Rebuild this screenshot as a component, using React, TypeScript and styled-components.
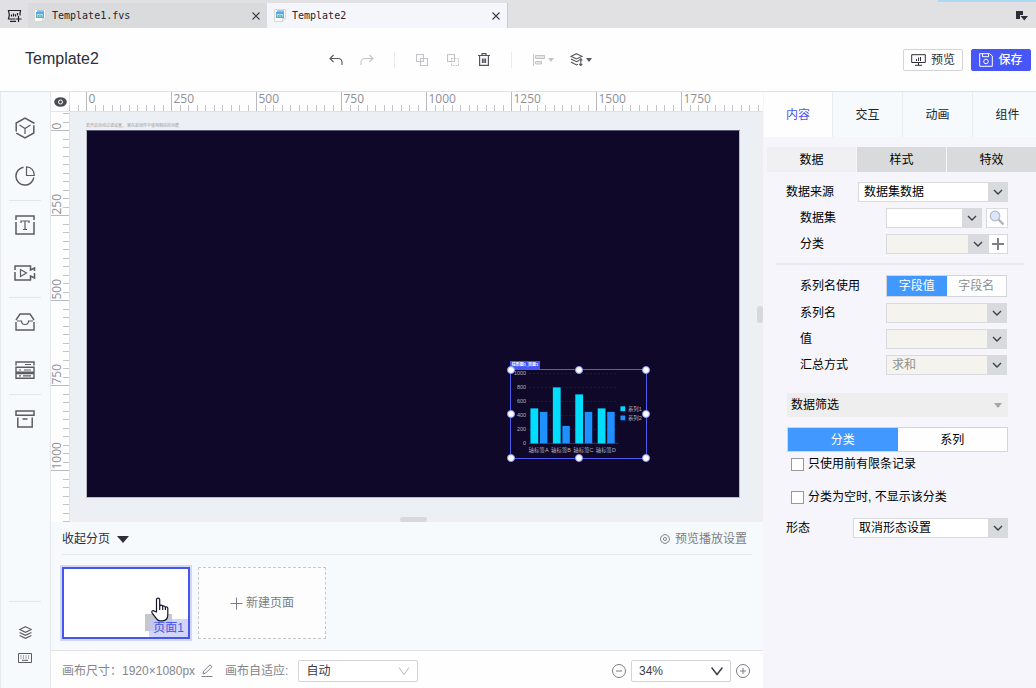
import React from 'react';
import styled, { createGlobalStyle } from 'styled-components';

const GlobalStyle = createGlobalStyle`
  *, *::before, *::after { box-sizing: border-box; }
  body {
    margin: 0;
    background: #f5f5fb;
    color: #1f2029;
    font: 12px/16px "Liberation Sans", "Noto Sans CJK SC", sans-serif;
  }
  button, select, input { font: inherit; color: inherit; margin: 0; }
  button { padding: 0; border: 0; background: none; cursor: pointer; }
  svg { display: block; flex: none; }
`;

const Page = styled.div`
  min-height: 100vh;
  display: flex;
  flex-direction: column;
  overflow: hidden;
`;

/* ---------- file tabs ---------- */

const TabStrip = styled.nav`
  position: relative;
  display: flex;
  height: 28px;
  padding-top: 3px;
  background: #e1e1e3;
`;

const Accent = styled.span`
  position: absolute;
  top: 0;
  right: 0;
  width: 98px;
  height: 2px;
  background: #acd8f6;
`;

const StripButton = styled.button`
  display: grid;
  place-items: center;
  width: 28px;
  height: 25px;
`;

const FileTab = styled.div<{ $active?: boolean }>`
  display: flex;
  align-items: center;
  flex: 0 1 240px;
  padding: 0 7px 0 6px;
  gap: 6px;
  background: ${p => (p.$active ? '#f5f5fc' : '#dadbdd')};
  border-right: 1px solid ${p => (p.$active ? '#c9c9ce' : '#f5f5fc')};
  color: #3b3c45;
`;

const FileName = styled.span`
  flex: 1;
  font: 10px/16px "DejaVu Sans Mono", monospace;
  color: #24242c;
`;

const Spacer = styled.div`
  flex: 1;
`;

/* ---------- header ---------- */

const Header = styled.header`
  display: flex;
  align-items: center;
  height: 64px;
  padding: 0 5px 0 25px;
  background: #fefefe;
  border-bottom: 1px solid #e2e2e4;
`;

const Title = styled.h1`
  width: 295px;
  margin: 0;
  font-size: 16px;
  line-height: 20px;
  font-weight: 400;
  color: #2d2e38;
  padding-bottom: 2px;
`;

const Tools = styled.div`
  display: flex;
  align-items: center;
`;

const Tool = styled.button<{ $wide?: boolean; $dim?: boolean }>`
  display: flex;
  align-items: center;
  justify-content: center;
  gap: 3px;
  width: ${p => (p.$wide ? 38 : 31)}px;
  height: 24px;
  color: ${p => (p.$dim ? '#c3c4c8' : '#55565c')};
`;

const ToolRule = styled.span<{ $after: number }>`
  width: 1px;
  height: 16px;
  margin: 0 ${p => p.$after}px 0 12px;
  background: #ebebed;
`;

const HeaderButton = styled.button<{ $primary?: boolean }>`
  display: flex;
  align-items: center;
  justify-content: center;
  gap: 5px;
  width: 60px;
  height: 22px;
  margin-left: 8px;
  border: 1px solid ${p => (p.$primary ? '#4656f7' : '#d3d4d9')};
  border-radius: 2px;
  background: ${p => (p.$primary ? '#4656f7' : '#fff')};
  color: ${p => (p.$primary ? '#fff' : '#2d2e38')};
  font-weight: ${p => (p.$primary ? 500 : 400)};
`;

/* ---------- body ---------- */

const Body = styled.main`
  flex: 1;
  display: flex;
  min-height: 0;
  border-left: 1px solid #e8e9ee;
`;

const Rail = styled.aside`
  display: flex;
  flex-direction: column;
  flex: none;
  width: 50px;
  padding: 12px 1px 17px 0;
  background: #f6fafd;
  border-right: 1px solid #e4e6ea;
`;

const RailButton = styled.button<{ $small?: boolean }>`
  display: grid;
  place-items: center;
  height: ${p => (p.$small ? 26 : 48)}px;
  color: #5b5c62;
`;

const RailRule = styled.hr<{ $last?: boolean }>`
  width: 32px;
  height: 1px;
  margin: 0 auto ${p => (p.$last ? 17 : 0)}px;
  border: 0;
  background: #e2e5e9;
`;

const Center = styled.section`
  flex: 1;
  min-width: 0;
  display: flex;
  flex-direction: column;
`;

const Stage = styled.div`
  flex: 1;
  display: grid;
  grid-template-columns: 19px minmax(0, 1fr) 7px;
  grid-template-rows: 20px minmax(0, 1fr) 5px;
  background: #efeff3;
`;

const Corner = styled.button`
  display: grid;
  place-items: center;
  background: #fefefe;
  border-right: 1px solid #e4e5e9;
  border-bottom: 1px solid #e4e5e9;
`;

const TopRuler = styled.div`
  grid-column: 2 / 4;
  display: flex;
  min-width: 0;
  background: #fefefe;
  border-bottom: 1px solid #dfe0e4;
  & > svg { flex: 1 1 0; min-width: 0; height: 19px; overflow: visible; }
`;

const SideRuler = styled.div`
  grid-row: 2 / 4;
  display: flex;
  flex-direction: column;
  min-height: 0;
  background: #fefefe;
  border-right: 1px solid #dfe0e4;
  & > svg { flex: 1 1 0; min-height: 0; width: 18px; overflow: visible; }
`;

const Workspace = styled.div`
  padding-left: 16px;
  overflow: hidden;
  background: #eceff4;
`;

const CanvasHint = styled.p`
  display: flex;
  align-items: flex-end;
  height: 18px;
  margin: 0;
  padding-bottom: 1px;
  font-size: 4px;
  line-height: 6px;
  color: #9a9ba1;
`;

const Screen = styled.div`
  position: relative;
  width: 654px;
  height: 368px;
  background: #0f0828;
  border: 1px solid #b9bac6;
  border-top-color: #5a5a78;
`;

const Widget = styled.div`
  position: absolute;
  left: 423px;
  top: 238px;
  width: 137px;
  height: 90px;
  border: 1px solid #4f5cf0;
`;

const WidgetTag = styled.span`
  position: absolute;
  left: -1px;
  top: -9px;
  width: 30px;
  height: 8px;
  background: #4656f7;
  color: #fff;
  font-size: 4px;
  font-weight: 700;
  line-height: 8px;
  text-align: center;
  white-space: nowrap;
`;

const Handle = styled.span<{ $x: number; $y: number }>`
  position: absolute;
  left: ${p => p.$x}%;
  top: ${p => p.$y}%;
  width: 8px;
  height: 8px;
  margin: -4px;
  border: 1px solid #8d95f6;
  border-radius: 50%;
  background: #fff;
`;

const SideScroll = styled.div`
  display: flex;
  align-items: center;
  justify-content: flex-end;
`;

const BottomScroll = styled.div`
  grid-column: 2 / 4;
  display: flex;
  align-items: center;
  justify-content: center;
  padding-right: 6px;
`;

const Thumb = styled.span<{ $w: number; $h: number }>`
  width: ${p => p.$w}px;
  height: ${p => p.$h}px;
  border-radius: 3px;
  background: #d8d8dc;
`;

/* ---------- pages ---------- */

const Pages = styled.section`
  padding: 0 11px;
  background: #f6fafd;
`;

const PagesHead = styled.div`
  display: flex;
  align-items: center;
  justify-content: space-between;
  height: 33px;
  padding: 2px 5px 0 0;
  border-bottom: 1px solid #e4e6ea;
`;

const TextButton = styled.button<{ $dim?: boolean }>`
  display: flex;
  align-items: center;
  gap: ${p => (p.$dim ? 5 : 7)}px;
  color: ${p => (p.$dim ? '#7c7d84' : '#2d2e38')};
`;

const PageList = styled.div`
  display: flex;
  gap: 8px;
  padding: 12px 0 11px;
`;

const PageCard = styled.button`
  position: relative;
  width: 128px;
  height: 72px;
  border: 2px solid #4656e8;
  background: #fff;
  outline: 2px solid #d3d8fa;
`;

const CardShade = styled.span`
  position: absolute;
  right: 16px;
  bottom: 6px;
  width: 27px;
  height: 17px;
  background: #c6c6cb;
`;

const CardName = styled.span`
  position: absolute;
  right: 0;
  bottom: 0;
  padding: 1px 4px;
  background: rgba(195, 199, 248, 0.75);
  color: #4656e8;
`;

const Pointer = styled.svg`
  position: absolute;
  left: 86px;
  top: 28px;
`;

const NewPage = styled.button`
  display: flex;
  align-items: center;
  justify-content: center;
  gap: 3px;
  width: 128px;
  height: 72px;
  border: 1px dashed #c6c8ce;
  background: #fdfdfe;
  color: #7c7d84;
`;

const Footer = styled.footer`
  display: flex;
  align-items: center;
  height: 38px;
  padding: 2px 13px 0 11px;
  background: #fefefe;
  border-top: 1px solid #e2e2e6;
  color: #85868c;
`;

const FooterText = styled.span`
  margin-right: 6px;
`;

const EditSize = styled.button`
  margin-right: 12px;
`;

const FieldLabel = styled.label`
  margin-right: 10px;
`;

const ZoomButton = styled.button`
  color: #7c7d84;
`;

const Rounded = styled.div<{ $w: number }>`
  position: relative;
  width: ${p => p.$w}px;
  margin-right: 5px;
  color: #3b3c45;
  select {
    display: block;
    width: 100%;
    height: 22px;
    padding: 0 24px 0 7px;
    appearance: none;
    border: 1px solid #d3d4d9;
    border-radius: 2px;
    background: #fff;
  }
  svg {
    position: absolute;
    right: 8px;
    top: 6px;
    pointer-events: none;
  }
`;

/* ---------- property panel ---------- */

const Panel = styled.aside`
  flex: none;
  width: 273px;
  overflow: hidden;
  background: #f5f5fb;
  color: #000;
`;

const PanelTabs = styled.div`
  display: flex;
  padding-left: 1px;
`;

const PanelTab = styled.button<{ $active?: boolean }>`
  flex: none;
  width: 69px;
  height: 45px;
  background: ${p => (p.$active ? '#fefefe' : '#f6fafd')};
  border-right: 1px solid #ebecf2;
  color: ${p => (p.$active ? '#4656e8' : '#22232b')};
  &:nth-child(n + 2) { width: 70px; }
`;

const SubTabs = styled.div`
  display: flex;
  gap: 1px;
  padding: 10px 0 0 4px;
`;

const SubTab = styled.button<{ $active?: boolean }>`
  flex: none;
  width: 89px;
  height: 25px;
  background: ${p => (p.$active ? '#f0f0f2' : '#d9dadc')};
`;

const Group = styled.div<{ $left: number; $right?: number; $top: number }>`
  display: flex;
  flex-direction: column;
  gap: 6px;
  padding: ${p => p.$top}px ${p => p.$right ?? 28}px 0 ${p => p.$left}px;
`;

const Row = styled.div<{ $label: number }>`
  display: grid;
  grid-template-columns: ${p => p.$label}px minmax(0, 1fr);
  align-items: center;
`;

const Inline = styled.div<{ $gap: number }>`
  display: flex;
  align-items: center;
  gap: ${p => p.$gap}px;
`;

const Combo = styled.div<{ $disabled?: boolean }>`
  position: relative;
  flex: 1;
  min-width: 0;
  color: ${p => (p.$disabled ? '#8f8f8f' : '#000')};
  select {
    display: block;
    width: 100%;
    height: 20px;
    padding: 0 22px 0 5px;
    appearance: none;
    border: 1px solid #d9dadd;
    border-radius: 0;
    background: ${p => (p.$disabled ? '#f4f3ed' : '#fff')};
    color: inherit;
    opacity: 1;
  }
`;

const ComboArrow = styled.span`
  position: absolute;
  top: 0;
  right: 0;
  display: grid;
  place-items: center;
  width: 20px;
  height: 20px;
  background: #d9dadd;
  color: #3c4048;
  pointer-events: none;
`;

const SquareButton = styled.button<{ $w: number }>`
  display: grid;
  place-items: center;
  width: ${p => p.$w}px;
  height: 20px;
  border: 1px solid #d9dadd;
  background: #fff;
`;

const PanelRule = styled.hr`
  height: 2px;
  margin: 9px 12px 0 13px;
  border: 0;
  background: #e9e9ec;
`;

const Segmented = styled.div<{ $h: number }>`
  display: flex;
  height: ${p => p.$h}px;
  border: 1px solid #d3d5da;
  background: #fff;
`;

const Segment = styled.button<{ $on?: boolean; $dim?: boolean }>`
  flex: 1;
  background: ${p => (p.$on ? '#4199ff' : '#fefefe')};
  color: ${p => (p.$on ? '#fff' : p.$dim ? '#8f8f8f' : '#000')};
`;

const FilterHead = styled.button`
  display: flex;
  align-items: center;
  justify-content: space-between;
  height: 24px;
  margin-bottom: 4px;
  padding: 0 6px 0 4px;
  background: #eeeeef;
`;

const Check = styled.label`
  display: flex;
  align-items: center;
  gap: 4px;
  padding-left: 4px;
  margin-bottom: 11px;
  input {
    appearance: none;
    width: 13px;
    height: 13px;
    border: 1px solid #97989c;
    background: #fff;
  }
`;

/* ---------- icons ---------- */

type IconProps = { w?: number; h?: number; box?: string; sw?: number; children: React.ReactNode };
const Icon = ({ w = 20, h = w, box = `0 0 ${w} ${h}`, sw = 1, children }: IconProps) => (
  <svg width={w} height={h} viewBox={box} fill="none" stroke="currentColor" strokeWidth={sw} aria-hidden="true">
    {children}
  </svg>
);

const Chevron = () => <Icon w={10} h={6} sw={1.4}><path d="M1 1l4 4 4-4" /></Icon>;
const Vee = ({ sw = 1 }: { sw?: number }) => <Icon w={12} h={10} sw={sw}><path d="M.5 1.500l5.500 7 5.500-7" /></Icon>;
const Caret = ({ w = 6, h = 4 }: { w?: number; h?: number }) => (
  <svg width={w} height={h} viewBox="0 0 6 4" preserveAspectRatio="none" fill="currentColor" aria-hidden="true"><path d="M0 0h6L3 4z" /></svg>
);
const Close = () => <Icon w={8} sw={1.1}><path d="M.5.5l7 7M7.500.5l-7 7" /></Icon>;

const FileIcon = () => (
  <svg width="12" height="13" viewBox="0 0 12 13" aria-hidden="true">
    <path d="M.5.5h11v9l-3 3h-8z" fill="#fdfdfd" stroke="#d9d8d2" />
    <path d="M3 1.5h7v1.2H3z" fill="#4a9fd8" />
    <rect x="2" y="3" width="8" height="6" fill="#56a9e2" />
    <path d="M3.3 5h5.4v2.8H3.3z" fill="#d7f1f7" />
    <path d="M4.5 7.8V6M6 7.8V5.2M7.5 7.8V6" stroke="#33a68c" strokeWidth=".9" />
    <path d="M8.5 12.5v-3h3" fill="#eee" stroke="#c9c8c2" strokeWidth=".7" />
  </svg>
);

const Combobox = ({ id, label, value = '', disabled }: { id?: string; label: string; value?: string; disabled?: boolean }) => (
  <Combo $disabled={disabled}>
    <select id={id} aria-label={id ? undefined : label} disabled={disabled} defaultValue={value}>
      <option value={value}>{value}</option>
    </select>
    <ComboArrow><Chevron /></ComboArrow>
  </Combo>
);

/* ---------- rulers ---------- */

// One tick every 25 canvas units, a labelled one every 250.
const STEP = 8.5;
const tickRange = (last: number) => Array.from({ length: last + 3 }, (_, i) => i - 2);
const topTicks = tickRange(79);
const sideTicks = tickRange(46);

const HorizontalRuler = () => (
  <svg height="19" aria-hidden="true" shapeRendering="crispEdges">
    {topTicks.map(i => {
      const x = 16.5 + i * STEP;
      const major = i % 10 === 0;
      return (
        <g key={i}>
          <line x1={x} x2={x} y1={major ? 0 : 13} y2={19} stroke={major ? '#b9bac0' : '#c3c4cb'} />
          {major && <text x={x + 2} y={11} fontSize="12" fontFamily="Open Sans, sans-serif" fill="#8f9096">{i * 25}</text>}
        </g>
      );
    })}
  </svg>
);

const VerticalRuler = () => (
  <svg width="18" aria-hidden="true" shapeRendering="crispEdges">
    {sideTicks.map(i => {
      const y = 18.5 + i * STEP;
      const major = i % 10 === 0;
      return (
        <g key={i}>
          <line x1={major ? 0 : 12} x2={18} y1={y} y2={y} stroke={major ? '#b9bac0' : '#c3c4cb'} />
          {major && (
            <text transform={`translate(10 ${y - 1}) rotate(-90)`} fontSize="12" fontFamily="Open Sans, sans-serif" fill="#8f9096">
              {i * 25}
            </text>
          )}
        </g>
      );
    })}
  </svg>
);

/* ---------- chart on the canvas ---------- */

const series = [
  { name: '轴标签A', a: 500, b: 450 },
  { name: '轴标签B', a: 800, b: 250 },
  { name: '轴标签C', a: 700, b: 450 },
  { name: '轴标签D', a: 500, b: 450 },
];
const BASE = 216;
const UNIT = 0.206;

const BarChart = () => (
  <svg width="135" height="88" viewBox="0 0 397 259" fontSize="16" fill="#b4b6c2" overflow="visible" role="img" aria-label="柱形图">
    {[0, 200, 400, 600, 800, 1000].map(v => (
      <g key={v}>
        <line x1="52" x2="316" y1={BASE - v * UNIT} y2={BASE - v * UNIT} stroke={v ? '#2b2747' : '#4a4a66'} strokeWidth="2" strokeDasharray={v ? '6 6' : undefined} />
        <text x="44" y={BASE + 6 - v * UNIT} textAnchor="end">{v}</text>
      </g>
    ))}
    {series.map((s, i) => {
      const x = 57 + i * 66;
      return (
        <g key={s.name}>
          <rect x={x} y={BASE - s.a * UNIT} width="23" height={s.a * UNIT} fill="#00ddff" />
          <rect x={x + 28} y={BASE - s.b * UNIT} width="22" height={s.b * UNIT} fill="#1e90ff" />
          <text x={x + 24} y="242" textAnchor="middle">{s.name}</text>
        </g>
      );
    })}
    <rect x="322" y="107" width="14" height="14" fill="#00ddff" />
    <text x="344" y="120">系列1</text>
    <rect x="322" y="134" width="14" height="14" fill="#1e90ff" />
    <text x="344" y="147">系列2</text>
  </svg>
);

const handles = [[0, 0], [50, 0], [100, 0], [0, 50], [100, 50], [0, 100], [50, 100], [100, 100]];

export default function App() {
  return (
    <Page>
      <GlobalStyle />
      <TabStrip>
        <Accent />
        <StripButton aria-label="新建模板">
          <Icon w={15} h={13} sw={1.2}>
            <path d="M8 10H1.5c1-3 1-6 0-8.500h12c-.6 2-.6 3.500-.4 5M3 12.300h6M11.500 7v6M8.500 10h6" />
            <path d="M4.500 7.500V5.500M6.500 7.500V4.500M8.500 7.500V5.200M10.500 6.500V4" />
          </Icon>
        </StripButton>
        <FileTab>
          <FileIcon />
          <FileName>Template1.fvs</FileName>
          <button aria-label="关闭"><Close /></button>
        </FileTab>
        <FileTab $active>
          <FileIcon />
          <FileName>Template2</FileName>
          <button aria-label="关闭"><Close /></button>
        </FileTab>
        <Spacer />
        <StripButton aria-label="模板列表">
          <svg width="12" height="10" viewBox="0 0 12 10" fill="#2d2e38"><path d="M0 0h7v4H4v4H0zM4.500 5H12L8.300 9.500z" /></svg>
        </StripButton>
      </TabStrip>

      <Header>
        <Title>Template2</Title>
        <Tools>
          <Tool aria-label="撤销">
            <Icon w={14} h={12} sw={1.1}><path d="M4.500 1L1 4.500 4.500 8M1 4.500h8c2.500 0 4 1.500 4 4V11" /></Icon>
          </Tool>
          <Tool $dim aria-label="重做">
            <Icon w={14} h={12} sw={1.1}><path d="M9.500 1L13 4.500 9.500 8M13 4.500H5c-2.500 0-4 1.500-4 4V11" /></Icon>
          </Tool>
          <ToolRule $after={11} />
          <Tool $dim aria-label="组合">
            <Icon w={12} sw={1.1}><path d="M.5.5h7v7h-7zM4.500 4.500h7v7h-7z" /></Icon>
          </Tool>
          <Tool $dim aria-label="取消组合">
            <Icon w={12} sw={1.1}><path d="M.5.5h7v7h-7z" /><path d="M4.500 4.500h7v7h-7z" strokeDasharray="2 1" /></Icon>
          </Tool>
          <Tool aria-label="删除">
            <Icon w={12} h={13} sw={1.2}><path d="M0 2.500h12M4 2.500V.6h4v1.900M1.600 2.500v9.800h8.800V2.500M4.500 5.500v4.500M6 5.500v4.500M7.500 5.500v4.500" /></Icon>
          </Tool>
          <ToolRule $after={12} />
          <Tool $wide $dim aria-label="对齐">
            <Icon w={12}><path d="M.5 0v12" /><path d="M2.500 1.500h9v3h-9zM2.500 7.500h6v2.500h-6z" fill="currentColor" fillOpacity=".4" /></Icon>
            <Caret />
          </Tool>
          <Tool $wide aria-label="图层">
            <Icon w={13} h={13} sw={1.1}>
              <path d="M6.500.7L12 3.300 6.500 6 1 3.300zM1 6l5.500 2.700L9 7.500M1 9l5.500 3 1.500-.7M10.800 6v6.300M9.300 7.300l1.500-1.500 1.500 1.500M9.300 11l1.500 1.500 1.500-1.500" />
            </Icon>
            <Caret />
          </Tool>
        </Tools>
        <Spacer />
        <HeaderButton>
          <Icon w={15} h={12}><path d="M.7.7h13.600v7.800H.7zM4 11.300h7M7.500 8.500v2.800M5.500 7V5M7.500 7V3.500M9.500 7V3" /></Icon>
          预览
        </HeaderButton>
        <HeaderButton $primary>
          <Icon w={14} h={14}><path d="M.7.7h10L13.300 3v10.300H.7zM3.500.7v3h6v-3" /><circle cx="7" cy="8.500" r="2.300" /></Icon>
          保存
        </HeaderButton>
      </Header>

      <Body>
        <Rail>
          <RailButton aria-label="三维">
            <Icon w={20} h={22} sw={1.5}><path d="M10 1l8.800 5v10L10 21l-8.800-5V6z" strokeDasharray="10.800 1.500 28 1.500 30" /><path d="M4.500 8L10 11.500 15.500 8M10 11.500V17" strokeWidth="1.200" /></Icon>
          </RailButton>
          <RailButton aria-label="图表">
            <Icon w={20} sw={1.5}><path d="M8.500 1.200a9 9 0 1 0 10.300 10.300" /><path d="M11.500.8v8.700h7.800c0-5-3-8.700-7.800-8.700z" strokeWidth="1.200" /></Icon>
          </RailButton>
          <RailRule />
          <RailButton aria-label="文本">
            <Icon w={20} sw={1.5}><path d="M1 5V1h18v4M1 7v12h18V7" /><path d="M6 8V6h8v2M10 6v8.500M8 14.500h4" strokeWidth="1.200" /></Icon>
          </RailButton>
          <RailButton aria-label="视频">
            <Icon w={22} h={16} sw={1.5}><path d="M1 5V1h15.500v4l4-2v3M1 7v8h15.500v-4l4 2V8" /><path d="M6.500 4.500v7L12.500 8z" strokeWidth="1.200" /></Icon>
          </RailButton>
          <RailRule />
          <RailButton aria-label="控件">
            <Icon w={20} h={18} sw={1.4}><path d="M1 7l4-6h10l4 6M1 9v8h18V9" /><path d="M2 8h4.500c0 2.500 1.500 3.500 3.500 3.500s3.500-1 3.500-3.500H18" strokeWidth="1.200" /></Icon>
          </RailButton>
          <RailButton aria-label="表格">
            <Icon w={20} h={18} sw={1.4}><path d="M1 4.500V1h18v3.500M1 6.300h18v5H1zM1 12.500h18v4.700H1z" /><path d="M10 3.500h6M4 9h2M9 9h7M4 14.800h2M8 14.800h8" strokeWidth="1.200" /></Icon>
          </RailButton>
          <RailRule />
          <RailButton aria-label="素材库">
            <Icon w={20} h={18} sw={1.5}><path d="M1 1h18v4.300H1zM2.800 7.500V17h14.400V7.500M7.500 9h5" /></Icon>
          </RailButton>
          <Spacer />
          <RailRule $last />
          <RailButton $small aria-label="图层">
            <Icon w={13} h={13} sw={1.1}><path d="M6.500.7L12.400 3.500 6.500 6.300.6 3.500zM.6 6.500l5.900 2.800 5.900-2.800M.6 9.500l5.900 2.800 5.900-2.800" /></Icon>
          </RailButton>
          <RailButton $small aria-label="快捷键">
            <Icon w={14} h={10}><path d="M.5.5h13v9H.5z" /><path d="M2.500 3h9M2.500 5h9" strokeDasharray="1 1.500" /><path d="M4 7.300h6" /></Icon>
          </RailButton>
        </Rail>

        <Center>
          <Stage>
            <Corner aria-label="显示参考线">
              <svg width="13" height="10" viewBox="0 0 13 10"><ellipse cx="6.500" cy="5" rx="6.300" ry="4.800" fill="#4b4c52" /><circle cx="6.500" cy="5" r="2" fill="none" stroke="#fff" /></svg>
            </Corner>
            <TopRuler><HorizontalRuler /></TopRuler>
            <SideRuler><VerticalRuler /></SideRuler>
            <Workspace>
              <CanvasHint>若开启自动过滤设置， 需在此组件中使用相应的功能</CanvasHint>
              <Screen>
                <Widget>
                  <BarChart />
                  <WidgetTag>柱形图1_页面1</WidgetTag>
                  {handles.map(([x, y]) => <Handle key={`${x}-${y}`} $x={x} $y={y} />)}
                </Widget>
              </Screen>
            </Workspace>
            <SideScroll><Thumb $w={6} $h={17} /></SideScroll>
            <BottomScroll><Thumb $w={27} $h={5} /></BottomScroll>
          </Stage>

          <Pages>
            <PagesHead>
              <TextButton>收起分页 <Caret w={12} h={7} /></TextButton>
              <TextButton $dim>
                <Icon w={10} h={10} box="0 0 12 12" sw={1.1}><path d="M4.200.8h3.600l.8 1.500 1.700.2L11.500 6l-1.200 3.500-1.700.2-.8 1.500H4.200l-.8-1.500-1.700-.2L.5 6l1.200-3.500 1.700-.2z" /><circle cx="6" cy="6" r="1.900" /></Icon>
                预览播放设置
              </TextButton>
            </PagesHead>
            <PageList>
              <PageCard>
                <CardShade />
                <CardName>页面1</CardName>
                <Pointer width="20" height="25" viewBox="0 0 20 25" fill="#fff" stroke="#14142a" strokeWidth="1.200" strokeLinejoin="round">
                  <path d="M6.500 15V2.800c0-2.300 3.200-2.300 3.200 0V9c.6-1.300 2.800-1 3 .5.700-1 2.500-.7 2.700.8.800-.8 2.400-.2 2.400 1.200v6.300c0 3.500-2 6-5.500 6H10c-2 0-3-1-4-2.700L2 15.800c-.8-1.700 1-3 2.400-1.700z" />
                  <path d="M9.700 9v4M12.700 9.500V13M15.400 10.300V13" fill="none" />
                </Pointer>
              </PageCard>
              <NewPage>
                <Icon w={13}><path d="M6.500.5v12M.5 6.500h12" /></Icon>
                新建页面
              </NewPage>
            </PageList>
          </Pages>

          <Footer>
            <FooterText>画布尺寸：1920×1080px</FooterText>
            <EditSize aria-label="编辑尺寸">
              <Icon w={12} h={13}><path d="M2 10l.7-3L9 .8l2 1.900L4.700 9zM.5 12.500h11" /></Icon>
            </EditSize>
            <FieldLabel htmlFor="fit">画布自适应:</FieldLabel>
            <Rounded $w={120}>
              <select id="fit" defaultValue="自动"><option>自动</option></select>
              <Icon w={12} h={10}><path d="M1 1.500l5 7 5-7" stroke="#b4b5bb" /></Icon>
            </Rounded>
            <Spacer />
            <Inline $gap={5}>
              <ZoomButton aria-label="缩小"><Icon w={14}><circle cx="7" cy="7" r="6.500" /><path d="M4 7h6" /></Icon></ZoomButton>
              <Rounded $w={100}>
                <select aria-label="缩放" defaultValue="34%"><option>34%</option></select>
                <Vee sw={1.5} />
              </Rounded>
            </Inline>
            <ZoomButton aria-label="放大"><Icon w={14}><circle cx="7" cy="7" r="6.500" /><path d="M4 7h6M7 4v6" /></Icon></ZoomButton>
          </Footer>
        </Center>

        <Panel>
          <PanelTabs>
            <PanelTab $active>内容</PanelTab>
            <PanelTab>交互</PanelTab>
            <PanelTab>动画</PanelTab>
            <PanelTab>组件</PanelTab>
          </PanelTabs>
          <SubTabs>
            <SubTab $active>数据</SubTab>
            <SubTab>样式</SubTab>
            <SubTab>特效</SubTab>
          </SubTabs>
          <Group $left={23} $top={10}>
            <Row $label={72}>
              <label htmlFor="source">数据来源</label>
              <Combobox id="source" label="数据来源" value="数据集数据" />
            </Row>
          </Group>
          <Group $left={37} $top={6}>
            <Row $label={86}>
              <label htmlFor="dataset">数据集</label>
              <Inline $gap={4}>
                <Combobox id="dataset" label="数据集" />
                <SquareButton $w={22} aria-label="搜索">
                  <svg width="16" height="16" viewBox="0 0 16 16"><circle cx="6" cy="6" r="4.800" fill="#dbe8fb" stroke="#b3bccb" strokeWidth="1.300" /><path d="M9.500 9.500l5 5" stroke="#b0b1b6" strokeWidth="2.200" /></svg>
                </SquareButton>
              </Inline>
            </Row>
            <Row $label={86}>
              <label htmlFor="category">分类</label>
              <Inline $gap={0}>
                <Combobox id="category" label="分类" disabled />
                <SquareButton $w={20} aria-label="添加"><Icon w={12} sw={2}><path d="M6 0v12M0 6h12" stroke="#7f8086" /></Icon></SquareButton>
              </Inline>
            </Row>
          </Group>
          <PanelRule />
          <Group $left={37} $right={29} $top={10}>
            <Row $label={86}>
              <span>系列名使用</span>
              <Segmented $h={22}>
                <Segment $on>字段值</Segment>
                <Segment $dim>字段名</Segment>
              </Segmented>
            </Row>
            <Row $label={86}>
              <label htmlFor="series">系列名</label>
              <Combobox id="series" label="系列名" disabled />
            </Row>
            <Row $label={86}>
              <label htmlFor="value">值</label>
              <Combobox id="value" label="值" disabled />
            </Row>
            <Row $label={86}>
              <label htmlFor="summary">汇总方式</label>
              <Combobox id="summary" label="汇总方式" value="求和" disabled />
            </Row>
          </Group>
          <Group $left={24} $top={18}>
            <FilterHead>
              数据筛选
              <svg width="8" height="5" viewBox="0 0 8 5" fill="#a2a5ad"><path d="M0 0h8L4 5z" /></svg>
            </FilterHead>
            <Segmented $h={25}>
              <Segment $on>分类</Segment>
              <Segment>系列</Segment>
            </Segmented>
          </Group>
          <Group $left={24} $top={4}>
            <Check><input type="checkbox" />只使用前有限条记录</Check>
            <Check><input type="checkbox" />分类为空时, 不显示该分类</Check>
          </Group>
          <Group $left={23} $top={2}>
            <Row $label={67}>
              <label htmlFor="shape">形态</label>
              <Combobox id="shape" label="形态" value="取消形态设置" />
            </Row>
          </Group>
        </Panel>
      </Body>
    </Page>
  );
}
